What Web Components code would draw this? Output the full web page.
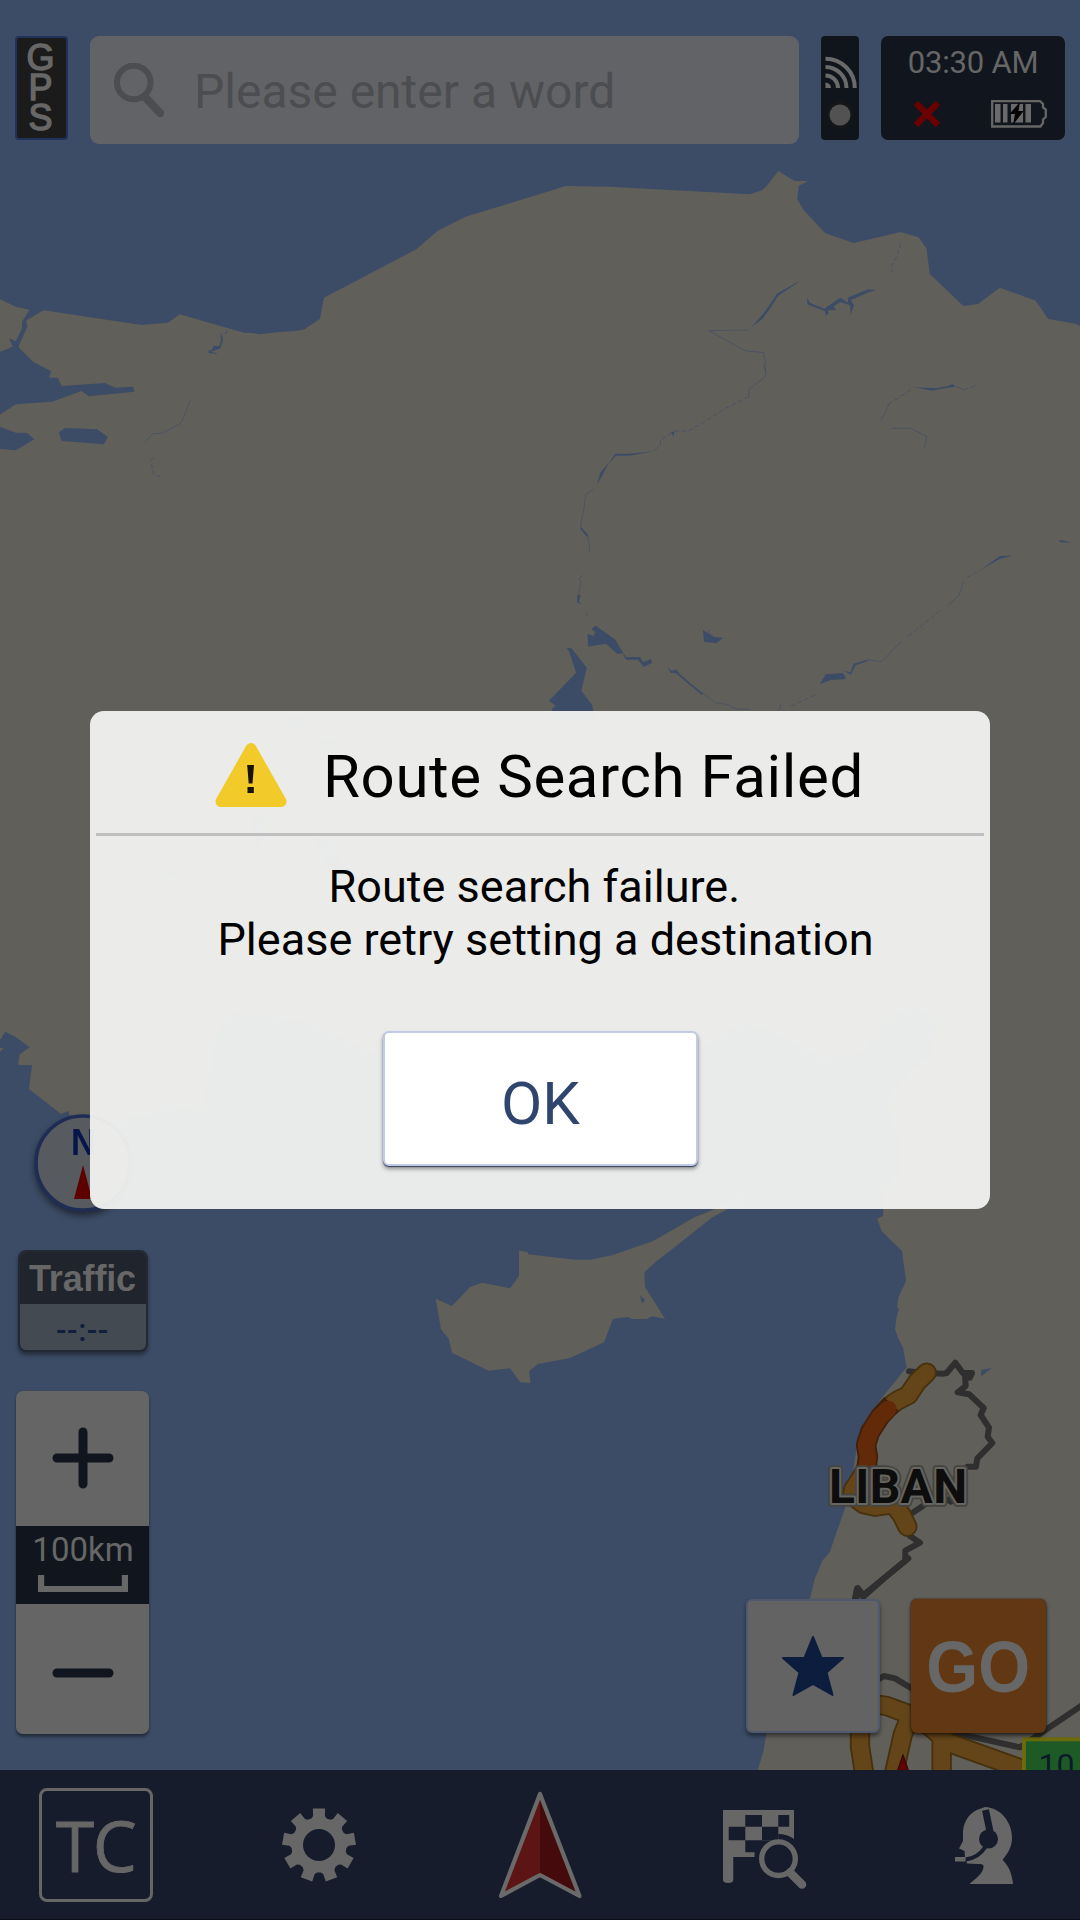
<!DOCTYPE html>
<html lang="en">
<head>
<meta charset="utf-8">
<title>Navigation</title>
<style>
html,body{margin:0;padding:0;width:1080px;height:1920px;overflow:hidden;background:#3c4c66}
body{font-family:Roboto,"Liberation Sans",sans-serif}
</style>
</head>
<body>
<nav-app></nav-app>
<script>
function define(name, html) {
  const t = document.createElement('template');
  t.innerHTML = '<style>*{box-sizing:border-box}svg{display:block}</style>' + html;
  customElements.define(name, class extends HTMLElement {
    constructor() {
      super();
      this.attachShadow({ mode: 'open' }).appendChild(t.content.cloneNode(true));
    }
  });
}

/* Outline of a nine-tooth gear centred at 57,57 */
function gearPath() {
  let d = '';
  for (let i = 0; i < 9; i++) {
    const at = (deg, r) => {
      const a = (i * 40 - 90 + deg) * Math.PI / 180;
      return (57 + r * Math.cos(a)).toFixed(2) + ' ' + (57 + r * Math.sin(a)).toFixed(2);
    };
    d += (i ? 'L' : 'M') + at(-24, 27.6) + 'L' + at(-16, 27.6) + 'L' + at(-11.5, 29.5) + 'L' + at(-9.5, 37) + 'L' + at(9.5, 37) + 'L' + at(11.5, 29.5);
  }
  return d + 'Z';
}

/* Map: land is the base colour, seas and lakes are laid over it */
define('map-canvas', `
<style>
:host{display:block;width:1080px;height:1920px}
.w{fill:#3c4c66}.l{fill:#615f5a}
.r{fill:none;stroke:#3c4c66;stroke-width:3.6}
.thin{stroke-width:2.6;opacity:.7}.dash{stroke-width:2.6;stroke-dasharray:14 7;opacity:.75}
.b{fill:none;stroke:#2f2f2f;stroke-width:18;stroke-linejoin:round;stroke-linecap:round}
.o,.a{fill:none;stroke-linejoin:round;stroke-linecap:round}
.o{stroke:#46310c;stroke-width:61}.a{stroke:#64451a;stroke-width:50}
.ro{stroke:#41200a;stroke-linecap:butt}.ra{stroke:#632a0a}
text{font-family:Roboto,sans-serif}
</style>
<svg width="1080" height="1920" viewBox="0 0 1080 1920">
<rect width="1080" height="1920" class="l"/>
<path class="w" d="M0 0H1080V325.7L1075.5 323.7 1048.3 319 1035.6 300.7 999.8 287.7 978 304 963.3 306 929.8 274 926.4 248.3 918.5 237.3 900.6 232 853.7 243 825 233 803.5 210 797.3 199 798.6 186 808 181H794.5L778.3 171 767.3 185.3 762 190.3 749.7 194.3 608.9 186.7 565.8 186 540 194 465.6 216.7 437.4 231 416.7 249 324 297.7 320 318.7 304.4 329.3 296 331 282.4 331.7 259.3 334.3 253 333 243.8 332.7 179.8 314.3 168 322.7 141.5 325 43.4 310.3 26 320.7 27.5 326 18.3 347 33.4 362 51.3 371.3 49 377.7H57.9L61.6 386 104.7 383 115.4 387.7 133 386.7 134.3 391.7 88.9 396.3 81.3 391 52.3 401.7 15.8 404.3 0 414.7V351.7L12.7 346.7 9 338.3 15.8 341 22 328.3V321.7L29.6 309.7 15.8 306.7 0 299.3Z"/>
<g transform="scale(.34439 .33333)">
<path class="w" d="M0 1280L46 1298 79 1299 100 1318 46 1351 0 1347ZM171 1297L189 1284 282 1288 313 1311 302 1333 179 1323ZM641 995L646 1012 647 1022 640 1045 612 1056 630 1059 629 1061 607 1060 605 1052 615 1049 620 1037 636 1039 641 1025Z"/>
<path class="r thin" d="M658 990V1001L650 998M551 1203L538 1240 525 1270 470 1300 445 1301 422 1325"/>
<path class="r dash" d="M446 1373L438 1382 442 1404 447 1426 468 1430"/>
</g>
<g transform="translate(540 0) scale(.34439 .33333)">
<path class="w" d="M752 845L692 887 665 930 645 958 613 981 640 951 660 925 688 881 748 846ZM776 892L783 908 825 926 872 893 895 908 893 893 952 868 976 870 958 875 902 901 912 915 902 946 900 916 872 906 852 919 860 930 836 931 839 940 829 947 828 934 776 913ZM1085 1162L1150 1165 1185 1158 1198 1152 1207 1160 1165 1166 1140 1172ZM165 1455L175 1418 200 1388 180 1428ZM380 1295H390L388 1310ZM218 1361L260 1361 330 1354 260 1367 220 1367 195 1397Z"/>
<path class="r thin" d="M606 990L490 992 595 1052 649 1058 655 1090 650 1100 655 1115M990 1260L1010 1222 1012 1212M1230 1170L1207 1158M1021 1285H1078L1123 1310 1116 1343M330 1355L350 1332V1320M655 1100V1130L606 1168V1190"/>
<path class="r dash" d="M1047 730L1035 772 1021 798 1023 817M606 1190L540 1224 470 1270 430 1293 390 1293 350 1320M1012 1212L1085 1164M1230 1170L1268 1156"/>
</g>
<g transform="translate(540 360) scale(.34439 .33333)">
<path class="w" d="M78 864H91L136 923 120 992 151 1034 160 1080H40L34 1048 45 1037 26 1022 105 938 85 876ZM138 822L156 827 160 815 149 808 162 797 219 839 241 878 250 891H290L299 906 322 898 326 908 301 921 285 899H250L240 880 225 882 191 851 140 860ZM473 810L506 831 532 833 512 850 476 845ZM812 973L830 943 880 939 889 957 845 960ZM881 932L902 937 911 911 950 899 952 903 916 916 903 944ZM370 920L383 933 395 928 406 942 440 973 476 1002 470 1004 435 975 395 940 380 939ZM1280 629L1335 588 1372 587 1335 597ZM1506 542L1517 540 1542 548 1510 547ZM117 500L138 522 137 532 118 508ZM108 728L109 705 118 705 113 726 122 732Z"/>
<path class="r thin" d="M155 387L133 404 128 445 118 495 123 510 138 525 144 560 143 573M124 646L113 655 119 664 112 704 109 728M136 761V769M476 1002L510 1028 545 1034 570 1047 610 1048M698 1032V1045L690 1052M950 899L992 905 1048 846M1230 665L1217 706 1185 735M493 808L490 816 497 828"/>
<path class="r dash" d="M729 1038L801 1004M1070 828L1165 750M1240 652L1280 630"/>
</g>
<path class="w" d="M0 1040L5.3 1031.7 15.3 1036.7 29.7 1047.3 19.7 1054.3 18 1064.7 32 1065.3 29 1089 61 1114 68.7 1111 69.3 1115 117 1125 133 1116 153 1113 167 1103 200 1112 207 1083 217 1030 230 1013 277 1017 310 1023 367 1050 430 1067H640L700 1050 733 1027 747 1023 787 1037 820 1058 860 1053 883 1023 913 1005 937 1020 933 1053 900 1083 887 1103 903 1147 897 1177 885 1190 883.3 1209 883 1215.7 877.3 1219 881.7 1231.3 902 1251 906 1281 898.3 1297.7 897 1308 899 1308.3 896.3 1318.3 895 1329.3 898.3 1338.3 903 1347.7 906.7 1367.3 880 1400 858 1440 850 1490 845 1508.3 835 1536.7 830 1551.7 822.3 1560.7 815 1578.3 810 1598 790 1650 766.7 1732.3 763.3 1751.7 757.7 1770H0Z"/>
<path class="w" opacity=".85" d="M288 718q12-6 20 4-8 12-22 6zM320 742l20 -6-8 18zM250 812l16 6-8 34zM312 838l14 2 24 30-18 0zM155 882l26-20-6 12-22 12z"/>
<path class="l" d="M0 1047.700L3.700 1048.300 0 1051.700Z"/>
<g transform="translate(400 1190) scale(.33333)">
<path class="l" d="M107 326L156 348 210 291 246 278 330 295 357 258V182L383 186 384 193 525 209H570L636 196 758 154 884 82 945 57 1040 20 983 57 937 82 820 175 769 214 733 247 735 291 795 386 755 379 740 387H695L685 381 639 386 612 457 510 504 414 522 387 543 392 579 361 577 330 535 266 542 156 488 146 446 123 418Z"/>
<path class="w" d="M720 315L735 330 726 341Z"/>
</g>
<g transform="translate(780 1200) scale(.33333)">
<path class="w" d="M603 510L635 504 604 529Z"/>
<path class="b" d="M387 514L420 518 490 521 500 519 526 488 548 518 576 519 570 533 555 527 557 558 533 577 568 583 611 624 602 645 627 683 623 710 637 729 592 775 588 800H562L530 830 512 905 490 893 440 910 398 938M390 1008L420 1028 376 1052V1082L310 1137 250 1190 231 1165 225 1195"/>
<path class="o" d="M440 518L412 545 385 585 350 603 325 622M262 800L240 838 220 868 216 886 250 912 285 920 340 912 365 945 382 980"/>
<path class="a" d="M440 518L412 545 385 585 350 603 325 622M262 800L240 838 220 868 216 886 250 912 285 920 340 912 365 945 382 980"/>
<path class="o ro" d="M335 612L300 650 270 697 258 735 264 770 259 808"/>
<path class="a ra" d="M325 627L300 650 270 697 258 735 264 770 260 803"/>
</g>
<g transform="translate(700 1560) scale(.33333)">
<path class="b" d="M470 115L474 85 490 105 625 -5M540 355L552 348 585 355 640 388M770 520L960 562 1150 433"/>
<path class="o" d="M520 432L560 438 620 460 690 500 745 548 960 625 1030 660M480 490V560L494 650M630 470L608 525 580 650M725 540V650"/>
<path class="a" d="M520 432L560 438 620 460 690 500 745 548 960 625 1030 660M480 490V560L494 650M630 470L608 525 580 650M725 540V650"/>
<path d="M609 584L586 650H632Z" fill="#650000" stroke="#1d0a05" stroke-width="3"/>
</g>
<rect x="1024" y="1739.300" width="70" height="50" fill="#1d5a25" stroke="#6b6a0c" stroke-width="4"/>
<text x="1038.500" y="1776" font-size="32" fill="#0b1a2c">10</text>
<g font-size="48" font-weight="700" stroke-linejoin="round" fill="#0d0d0d">
<text x="829" y="1502.700" textLength="138" stroke="#454440" stroke-width="7.500">LIBAN</text>
<text x="829" y="1502.700" textLength="138" stroke="#66655f" stroke-width="4">LIBAN</text>
<text x="829" y="1502.700" textLength="138">LIBAN</text>
</g>
<path d="M539.500 848V921M520 888H560" stroke="#8b3a3a" stroke-width="4" opacity=".8"/>
</svg>`);

define('gps-badge', `
<style>
:host{display:block;width:53px;height:104px;background:#1b1b1b;border:2px solid #22315a;border-radius:4px;overflow:hidden;
font:36px/51px "Liberation Sans",sans-serif;color:#676767;-webkit-text-stroke:1.400px #676767;writing-mode:vertical-rl;text-orientation:upright;letter-spacing:-11px;white-space:nowrap}
span{display:block;margin-top:-1px}
</style><span><slot></slot></span>`);

define('search-box', `
<style>
:host{display:flex;align-items:center;width:709px;height:108px;border-radius:9px;background:#626367;color:#4c4d50;padding-left:24px}
svg{flex:none;margin-right:30px}
span{font-size:48px;line-height:108px;white-space:nowrap;padding-top:4px}
</style>
<svg width="50" height="54" viewBox="0 0 50 54"><circle cx="19.700" cy="19.500" r="16.800" fill="none" stroke="currentColor" stroke-width="6"/><path d="M31 34L46 50" stroke="currentColor" stroke-width="8" stroke-linecap="round"/></svg>
<span><slot></slot></span>`);

define('signal-panel', `
<style>:host{display:block;width:38px;height:104px;background:#10151c;border-radius:4px}</style>
<svg width="38" height="104" viewBox="0 0 38 104"><g fill="none" stroke="#6a6a6a" stroke-width="4"><path d="M4.500 22.700A29.300 29.300 0 0 1 33.800 52M4.500 31A21 21 0 0 1 25.500 52M4.500 39.500A12.500 12.500 0 0 1 17 52"/></g><path d="M4.500 46.500A5.500 5.500 0 0 1 10 52H4.500Z" fill="#6a6a6a"/><circle cx="19" cy="79" r="13" fill="#171717"/><circle cx="19" cy="79" r="10.500" fill="#525252"/></svg>`);

define('status-panel', `
<style>
:host{display:flex;flex-direction:column;width:184px;height:104px;background:#11161e;border-radius:7px;color:#666}
.t{text-align:center;font-size:31px;line-height:36px;padding-top:9px;height:44px;letter-spacing:-.2px}
.i{display:flex;justify-content:space-between;padding:18px 18px 0 32px}
</style>
<div class="t"><slot></slot></div>
<div class="i">
<svg width="29" height="32" viewBox="0 0 29 32"><path d="M3 5L25 27M25 5L3 27" stroke="#6a0000" stroke-width="6.200"/></svg>
<svg width="56" height="32" viewBox="0 0 56 32"><path d="M1.200 3.200H49L52 6V9.500L54.800 11.500V19L52 21.500V25L49.500 28.500H1.200Z" fill="none" stroke="#666" stroke-width="2.300"/><path d="M4 6H9.500V24.500H4ZM12 6H16.500V24.500H12ZM20 6H32V24.500H20ZM34.500 6H40V24.500H34.500Z" fill="#6a6a6a"/><path d="M29 4L18.500 16H24L22 27 32.500 13H27.500Z" fill="#050505"/></svg>
</div>`);

define('compass-dial', `
<style>:host{display:block;width:98px;height:98px;filter:drop-shadow(0 4px 3px #0007)}text{font:700 36px "Liberation Sans",sans-serif}</style>
<svg width="98" height="98" viewBox="0 0 98 98"><circle cx="49" cy="49" r="47" fill="#575b60" stroke="#1f2d54" stroke-width="3.600"/><text x="49.500" y="41" text-anchor="middle" fill="#06154a" textLength="25" lengthAdjust="spacingAndGlyphs">N</text><path d="M49 51L58 85H40Z" fill="#5d0000"/></svg>`);

define('traffic-box', `
<style>
:host{display:flex;flex-direction:column;width:130px;height:102px;border-radius:8px;background:#444a51;border:2px solid #222935;overflow:hidden;box-shadow:0 3px 4px #0006;text-align:center}
.h{height:52px;background:#20252d;color:#676767;font:700 36px/53px "Liberation Sans",sans-serif;letter-spacing:-.150px;white-space:nowrap;margin:0 -2px}
.v{height:46px;font-size:31px;line-height:54px;color:#0f1f3c;letter-spacing:.5px;font-weight:500}
</style><div class="h">Traffic</div><div class="v"><slot></slot></div>`);

define('zoom-control', `
<style>
:host{display:flex;flex-direction:column;width:133px;height:343px;border-radius:7px;background:#656565;box-shadow:0 3px 3px #0006,0 0 2px #3a4150;overflow:hidden}
.z{display:grid;place-items:center}.p{height:135px;padding-bottom:2px}.m{height:130px;padding-top:2px}
.s{height:78px;background:#11161e;color:#676767;text-align:center;display:flex;flex-direction:column;align-items:center}
.s span{font-size:33px;line-height:38px;height:49px;padding:5px 0 0 1px}
path{fill:none;stroke:#11161e;stroke-width:9;stroke-linecap:round}
.s path{stroke:#676767;stroke-width:6.200;stroke-linecap:butt}
</style>
<div class="z p"><svg width="62" height="62"><path d="M31 5V57M5 31H57"/></svg></div>
<div class="s"><span><slot></slot></span><svg width="90" height="18"><path d="M3.100 0V14H86.900V0"/></svg></div>
<div class="z m"><svg width="62" height="20"><path d="M5 13H57"/></svg></div>`);

define('star-button', `
<style>:host{display:grid;place-items:center;width:134px;height:134px;background:#636363;border:2px solid #4f586c;border-radius:6px;box-shadow:0 3px 4px #0007}</style>
<svg width="64" height="62" viewBox="0 0 64 62"><path d="M32 2L40.500 23H62L45.500 37.500 51.500 60 32 49 12.500 60 18.500 37.500 2 23H23.500Z" fill="#0c1d3d" stroke="#0c1d3d" stroke-width="2" stroke-linejoin="round"/></svg>`);

define('go-button', `
<style>:host{display:grid;place-items:center;width:135px;height:134px;background:#613813;border-radius:6px;box-shadow:0 3px 4px #0008,0 0 2px #2a1a08;font:700 71px/80px "Liberation Sans",sans-serif;color:#676767;white-space:nowrap}
span{transform:scale(.94,1.02);padding-top:2px}</style><span><slot></slot></span>`);

define('bottom-nav', `
<style>
:host{display:flex;justify-content:space-between;align-items:flex-start;height:150px;background:#161c2c;padding:18px 39px 0;border-bottom:1px solid #0b0e18}
.tc{width:114px;height:114px;border:3.500px solid #666;border-radius:8px;color:#666;font:70px/108px "Open Sans",sans-serif;text-align:center;white-space:nowrap;letter-spacing:-1.500px;-webkit-text-stroke:.8px #666;padding-right:1px}
</style>
<div class="tc">TC</div>
<svg width="114" height="114" viewBox="-1 0 114 114"><path d="${gearPath()}" fill="#676767"/><circle cx="57" cy="57" r="16" fill="#161c2c"/></svg>
<svg width="114" height="114" viewBox="483 1788 114 114"><path d="M540 1794L501 1896 540 1874.500Z" fill="#5d1414"/><path d="M540 1794L579.500 1896 540 1874.500Z" fill="#450a0b"/><path d="M540 1794L501 1896 540 1875 579.500 1896Z" fill="none" stroke="#6a6a6a" stroke-width="4.200" stroke-linejoin="round"/></svg>
<svg width="114" height="114" viewBox="705 1788 114 114"><path fill="#676767" fill-rule="evenodd" d="M723 1810H794V1839Q787 1834 778.500 1834V1840H762V1840.300H745.300V1852.300H754.500V1857H733.300V1880Q733.300 1883 728 1883 723 1882.500 723 1880ZM745.300 1815V1826.700H728.700V1840.300H745.300V1826.700H762V1815ZM778.300 1815V1826.700H762V1840.300H778.300V1826.700H789.200V1815Z"/><circle cx="778.500" cy="1858.700" r="16.800" fill="#161c2c" stroke="#676767" stroke-width="5.400"/><path d="M790 1872.500L802 1884.500" stroke="#676767" stroke-width="8.500" stroke-linecap="round"/></svg>
<svg width="114" height="114" viewBox="927 1788 114 114"><path d="M985 1807C1001 1808 1012 1822 1012 1838 1012 1846 1009 1852 1002.500 1860 1009 1866 1012 1874 1013 1884H969.500C975 1879 984 1873 983.500 1866 983 1864 981 1864 978 1864L967 1863.500 965 1857 964.500 1851 959 1848.500 963 1841V1831C964 1820 971 1811 981 1808.500Z" fill="#676767"/><path d="M985.500 1810L990.500 1834" stroke="#161c2c" stroke-width="7"/><circle cx="988.500" cy="1839" r="9.500" fill="#161c2c"/><path d="M986 1846C981 1854 975 1858.500 965.500 1859.500" fill="none" stroke="#161c2c" stroke-width="4"/><path d="M955 1857H965.500V1861.500H955Z" fill="#676767"/></svg>`);

define('alert-dialog', `
<style>
:host{display:flex;flex-direction:column;width:900px;height:498px;border-radius:14px;background:rgba(243,244,242,.945);color:#000}
.head{display:flex;height:122px;align-items:center;padding:10px 0 0 125px}
.head svg{margin:0 36px 5px 0}
.title{font-size:60px;line-height:70px;white-space:nowrap;letter-spacing:.6px}
hr{border:0;margin:0 6px;height:3px;background:#bfbfbf;flex:none}
.msg{height:195px;padding-top:24px;padding-left:11px;text-align:center;font-size:45px;line-height:53px;white-space:pre;letter-spacing:.02px}
.ok{align-self:center;margin-left:1px;width:315px;height:135px;background:#fff;border:2px solid #c2cbe6;border-radius:6px;box-shadow:0 3px 4px #0006,0 1px 1px #5a648c;display:grid;place-items:center;font-size:60px;line-height:70px;color:#30456e;padding-top:11px}
</style>
<div class="head"><svg width="72" height="64" viewBox="0 0 72 64"><path d="M36 5.500L66 58.500H6Z" fill="#f2cb2b" stroke="#f2cb2b" stroke-width="11" stroke-linejoin="round"/><path d="M32.200 22H39L37.500 40.500H33.700ZM32.500 44H38.800V50H32.500Z" fill="#171307"/></svg><span class="title"><slot name="title"></slot></span></div>
<hr>
<div class="msg"><slot></slot></div>
<div class="ok"><slot name="action"></slot></div>`);

define('nav-app', `
<style>
:host{display:flex;flex-direction:column;position:relative;width:1080px;height:1920px;overflow:hidden}
map-canvas{position:absolute;inset:0}
header,main,bottom-nav,.overlay{position:relative}
header{display:flex;padding:36px 15px 0;align-items:flex-start}
search-box{margin:0 22px 0 22px}signal-panel{margin-right:22px}
main{flex:1;display:flex;justify-content:space-between;align-items:flex-end;padding:0 34px 36px 16px}
.left{display:flex;flex-direction:column;align-items:center;gap:39px}
compass-dial{margin-bottom:-1px}
.right{display:flex;gap:31px;padding-bottom:1.500px}
.overlay{position:absolute;inset:0;display:grid;place-items:center}
</style>
<map-canvas></map-canvas>
<header><gps-badge>GPS</gps-badge><search-box>Please enter a word</search-box><signal-panel></signal-panel><status-panel>03:30 AM</status-panel></header>
<main>
<div class="left"><compass-dial></compass-dial><traffic-box>--:--</traffic-box><zoom-control>100km</zoom-control></div>
<div class="right"><star-button></star-button><go-button>GO</go-button></div>
</main>
<bottom-nav></bottom-nav>
<div class="overlay"><alert-dialog><span slot="title">Route Search Failed</span>Route search failure.  
Please retry setting a destination<span slot="action">OK</span></alert-dialog></div>`);
</script>
</body>
</html>
